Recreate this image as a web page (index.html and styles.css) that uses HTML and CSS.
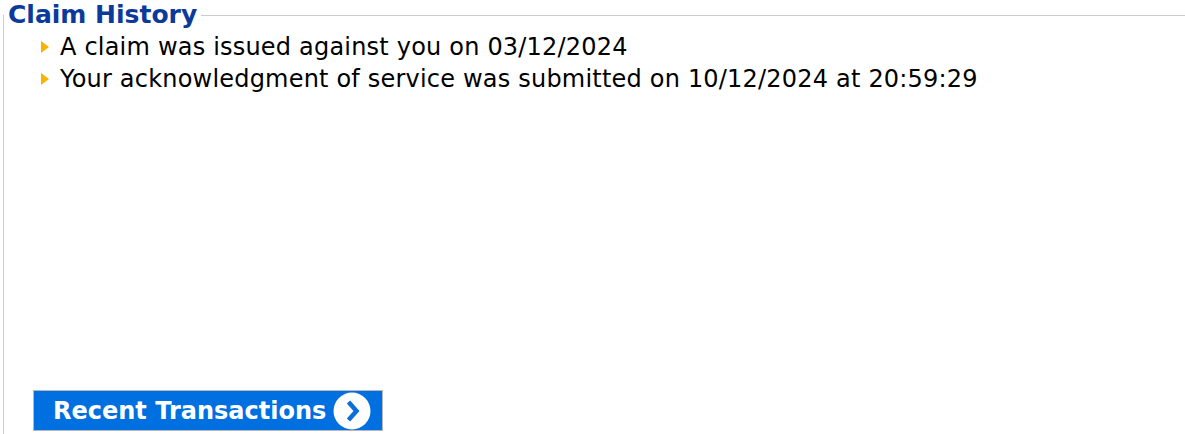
FILE: index.html
```html
<html>

<head>
    <title>Claim History</title>
    <link rel="stylesheet" href="styles.css">
</head>

<body>
    <fieldset class="history">
        <legend>Claim History</legend>
        <ul class="events">
            <li>A claim was issued against you on 03/12/2024</li>
            <li>Your acknowledgment of service was submitted on 10/12/2024 at 20:59:29</li>
        </ul>
        <a class="recent-button" href="#">
            Recent Transactions
            <span class="go-icon">
                <svg width="38" height="38" viewBox="0 0 38 38">
                    <circle cx="19" cy="19" r="18.5" fill="#ffffff" />
                    <path d="M15.5 10 L23.5 19 L15.5 28" fill="none" stroke="#0a6fd8" stroke-width="4.5" />
                </svg>
            </span>
        </a>
    </fieldset>
</body>

</html>
```

FILE: styles.css
```css
body {
    margin: 0;
    background-color: #ffffff;
    font-family: "DejaVu Sans", Verdana, sans-serif;
    overflow: hidden;
}

.history {
    margin: 0 0 0 3px;
    padding: 0 0 3px 0;
    border: none;
    border-top: 1px solid #cccccc;
    border-left: 1px solid #cccccc;
    display: flex;
    flex-direction: column;
}

.history legend {
    margin: 0;
    padding: 0 4px 0 4px;
    color: #0b3a9b;
    font-weight: bold;
    font-size: 25px;
    line-height: 30px;
}

.events {
    list-style: none;
    margin: 1px 0 0 37px;
    padding: 0;
    font-size: 24px;
    line-height: 32px;
    letter-spacing: 0.2px;
    color: #000000;
}

.events li {
    display: flex;
    align-items: center;
}

.events li::before {
    content: "";
    width: 0;
    height: 0;
    border-top: 6.5px solid transparent;
    border-bottom: 6.5px solid transparent;
    border-left: 8px solid #f6b400;
    margin: 0 11px 0 0;
}

.recent-button {
    margin: 295px 0 0 29px;
    align-self: flex-start;
    display: flex;
    align-items: center;
    gap: 7px;
    width: 329px;
    height: 39px;
    padding: 0 0 0 19px;
    background-color: #0070e0;
    border: 1px solid #b8b8b8;
    color: #ffffff;
    font-weight: bold;
    font-size: 24px;
    text-decoration: none;
}

.go-icon {
    display: flex;
}
```
